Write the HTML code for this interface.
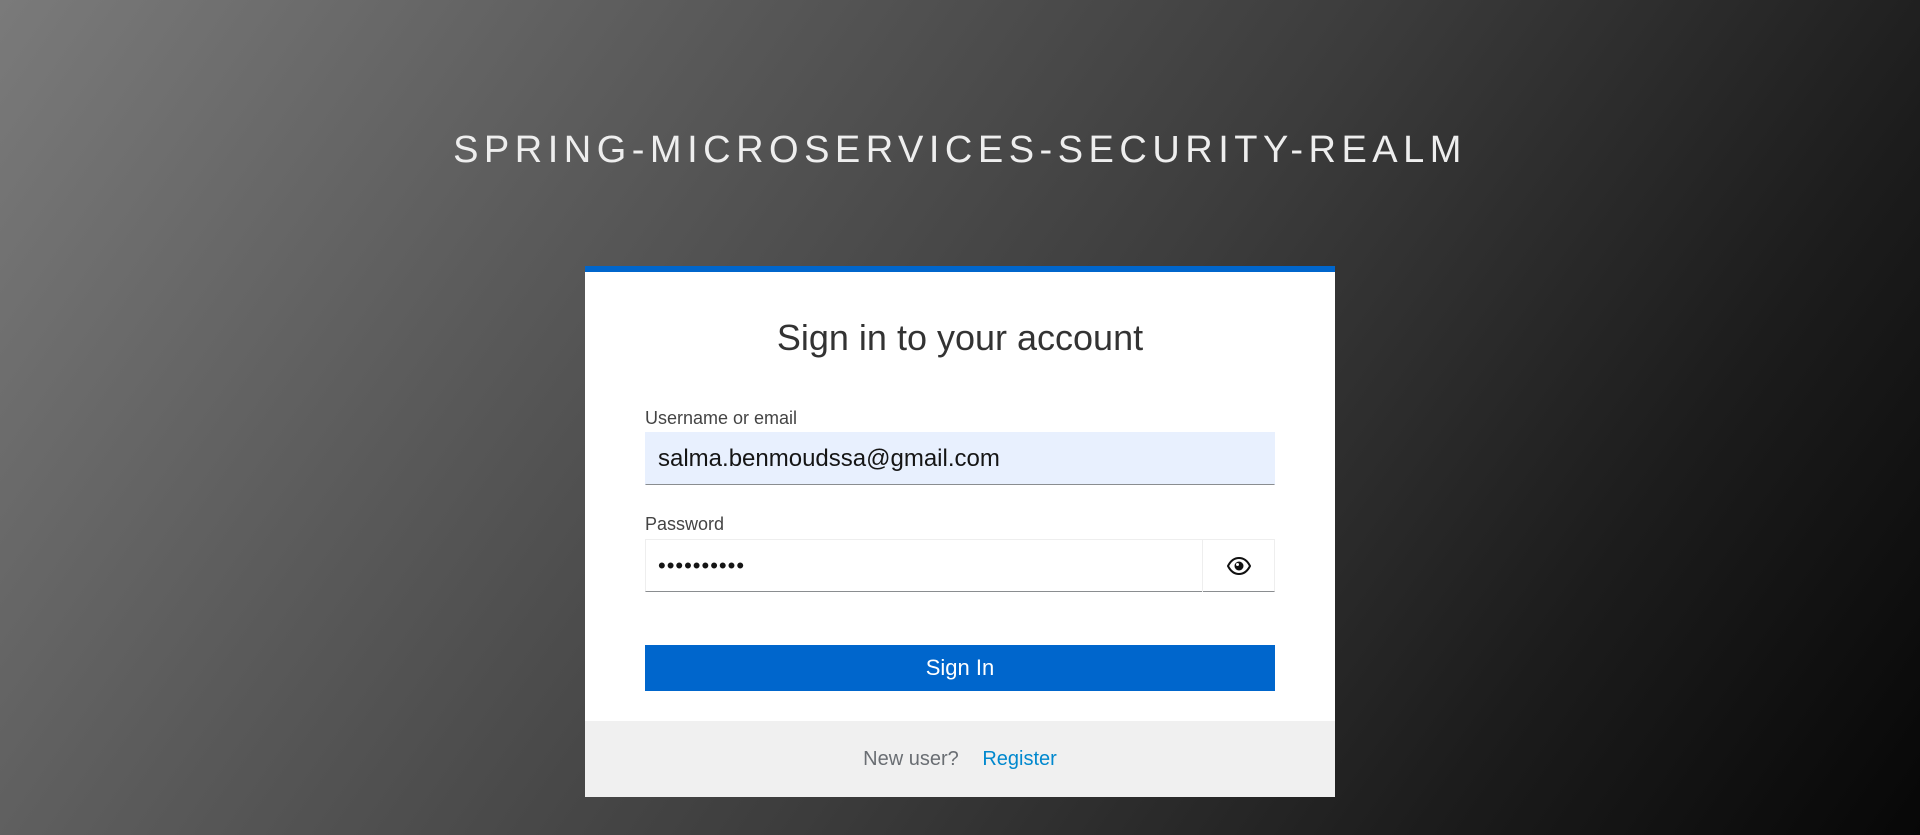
<!DOCTYPE html>
<html><head><meta charset="utf-8"><style>
*{margin:0;padding:0;box-sizing:border-box}
body{width:1920px;height:835px;overflow:hidden;font-family:"Liberation Sans",sans-serif;
background:linear-gradient(125deg,#7a7a7a 0%,#5a5a5a 28%,#3c3c3c 55%,#1c1c1c 80%,#070707 100%);position:relative}
.title{position:absolute;top:122px;left:0;text-align:center;color:#eee;font-size:38px;letter-spacing:5.5px;line-height:56px;padding-left:40px;width:1880px}
.card{position:absolute;left:585px;top:266px;width:750px;height:531px;background:#fff;border-top:6px solid #0066cc}
h1{font-size:36px;color:#333;text-align:center;position:absolute;top:44px;width:100%;line-height:44px;font-weight:normal}
.lab{position:absolute;left:60px;font-size:18px;color:#444}
.in{position:absolute;left:60px;width:630px;height:53px;border:1px solid #eee;border-bottom:1px solid #8a8d90;font-size:24px;color:#151515;padding-left:12px;line-height:51px}
.eye{position:absolute;right:0;top:-1px;width:72px;height:53px;border-left:1px solid #eee;display:flex;align-items:center;justify-content:center}
.btn{position:absolute;left:60px;top:373px;width:630px;height:46px;background:#0066cc;color:#fff;font-size:22px;text-align:center;line-height:46px}
.foot{position:absolute;left:0;bottom:0;width:100%;height:76px;background:#f0f0f0;text-align:center;line-height:76px;font-size:20px;color:#6a6e73}
.foot a{color:#0088ce;margin-left:18px}
</style></head><body>
<div class="title">SPRING-MICROSERVICES-SECURITY-REALM</div>
<div class="card">
<h1>Sign in to your account</h1>
<div class="lab" style="top:136px">Username or email</div>
<div class="in" style="top:160px;background:#e8f0fe;border-color:#e8f0fe;border-bottom-color:#8a8d90">salma.benmoudssa@gmail.com</div>
<div class="lab" style="top:242px">Password</div>
<div class="in" style="top:267px;letter-spacing:1px;font-size:22px">••••••••••
<div class="eye"><svg width="24" height="18" viewBox="0 0 24 18"><path d="M1 9C4 3 8 1 12 1s8 2 11 8c-3 6-7 8-11 8S4 15 1 9z" fill="none" stroke="#111" stroke-width="2"/><circle cx="12" cy="9" r="4.5" fill="#111"/><circle cx="10.5" cy="7.5" r="1.5" fill="#fff"/></svg></div></div>
<div class="btn">Sign In</div>
<div class="foot">New user? <a>Register</a></div>
</div>
</body></html>
